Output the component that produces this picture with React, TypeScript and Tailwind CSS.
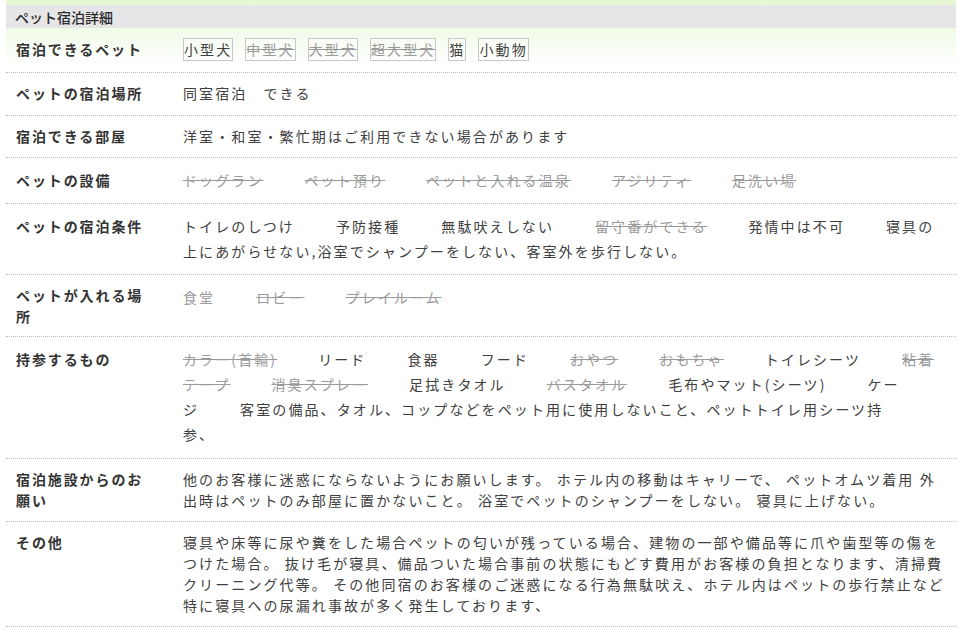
import React from "react";

type Item = { t: string; s?: boolean; g?: boolean };

const LABEL = "w-[177px] shrink-0 pl-[10px] pr-[32px] text-[14px] font-bold tracking-[1.9px] text-[#333]";
const VALUE = "w-[764px] text-[14px] tracking-[2.1px] text-[#404040]";

function ItemList({ items }: { items: Item[] }) {
  return (
    <div className={VALUE + " leading-[25px]"}>
      {items.map((it, i) => (
        <span
          key={i}
          className={
            "mr-[41px] " +
            (it.s
              ? "text-[#9a9a9a] line-through decoration-[#9a9a9a]"
              : it.g
              ? "text-[#9a9a9a]"
              : "")
          }
        >
          {it.t}
        </span>
      ))}
    </div>
  );
}

function Row({
  label,
  pb,
  labelLead,
  children,
}: {
  label: string;
  pb: string;
  labelLead: string;
  children: React.ReactNode;
}) {
  return (
    <div className={"flex border-b border-dotted border-[#bdbdbd] pt-[10px] " + pb}>
      <div className={LABEL + " " + labelLead}>{label}</div>
      {children}
    </div>
  );
}

export default function App() {
  const pets: Item[] = [
    { t: "小型犬" },
    { t: "中型犬", s: true },
    { t: "大型犬", s: true },
    { t: "超大型犬", s: true },
    { t: "猫" },
    { t: "小動物" },
  ];
  const facilities: Item[] = [
    { t: "ドッグラン", s: true },
    { t: "ペット預り", s: true },
    { t: "ペットと入れる温泉", s: true },
    { t: "アジリティ", s: true },
    { t: "足洗い場", s: true },
  ];
  const conditions: Item[] = [
    { t: "トイレのしつけ" },
    { t: "予防接種" },
    { t: "無駄吠えしない" },
    { t: "留守番ができる", s: true },
    { t: "発情中は不可" },
    { t: "寝具の上にあがらせない,浴室でシャンプーをしない、客室外を歩行しない。" },
  ];
  const places: Item[] = [
    { t: "食堂", g: true },
    { t: "ロビー", s: true },
    { t: "プレイルーム", s: true },
  ];
  const bring: Item[] = [
    { t: "カラー(首輪)", s: true },
    { t: "リード" },
    { t: "食器" },
    { t: "フード" },
    { t: "おやつ", s: true },
    { t: "おもちゃ", s: true },
    { t: "トイレシーツ" },
    { t: "粘着テープ", s: true },
    { t: "消臭スプレー", s: true },
    { t: "足拭きタオル" },
    { t: "バスタオル", s: true },
    { t: "毛布やマット(シーツ)" },
    { t: "ケージ" },
    { t: "客室の備品、タオル、コップなどをペット用に使用しないこと、ペットトイレ用シーツ持参、" },
  ];

  return (
    <div className="min-h-[630px] bg-white font-['Noto_Sans_CJK_JP','Noto_Sans',sans-serif]">
      <div className="ml-[6px] w-[950px] bg-[linear-gradient(to_bottom,#e5f7d3_0px,#f1fbe9_30px,#ffffff_66px)] pt-[5px]">
        <div className="flex h-[23px] items-center bg-[#e6e6e8] pl-[9px] text-[14px] font-medium leading-none text-[#2a2a2a]">
          ペット宿泊詳細
        </div>

        <Row label="宿泊できるペット" pb="pb-[11px]" labelLead="leading-[23px]">
          <div className={VALUE + " flex items-start gap-[12px] leading-[21px]"}>
            {pets.map((p, i) => (
              <span
                key={i}
                className={
                  "inline-block border border-[#c8c8c8] bg-white/40 " +
                  (p.s ? "text-[#9a9a9a] line-through decoration-[#9a9a9a]" : "")
                }
              >
                {p.t}
              </span>
            ))}
          </div>
        </Row>

        <Row label="ペットの宿泊場所" pb="pb-[11px]" labelLead="leading-[21px]">
          <div className={VALUE + " leading-[21px]"}>同室宿泊　できる</div>
        </Row>

        <Row label="宿泊できる部屋" pb="pb-[10px]" labelLead="leading-[21px]">
          <div className={VALUE + " leading-[21px]"}>洋室・和室・繁忙期はご利用できない場合があります</div>
        </Row>

        <Row label="ペットの設備" pb="pb-[10px]" labelLead="leading-[25px]">
          <ItemList items={facilities} />
        </Row>

        <Row label="ペットの宿泊条件" pb="pb-[10px]" labelLead="leading-[25px]">
          <ItemList items={conditions} />
        </Row>

        <Row label="ペットが入れる場所" pb="pb-[9px]" labelLead="leading-[21px]">
          <ItemList items={places} />
        </Row>

        <Row label="持参するもの" pb="pb-[11px]" labelLead="leading-[25px]">
          <ItemList items={bring} />
        </Row>

        <Row label="宿泊施設からのお願い" pb="pb-[10px]" labelLead="leading-[21px]">
          <div className={VALUE + " leading-[21px]"}>
            他のお客様に迷惑にならないようにお願いします。 ホテル内の移動はキャリーで、 ペットオムツ着用 外出時はペットのみ部屋に置かないこと。 浴室でペットのシャンプーをしない。 寝具に上げない。
          </div>
        </Row>

        <Row label="その他" pb="pb-[10px]" labelLead="leading-[21px]">
          <div className={VALUE + " leading-[21px]"}>
            寝具や床等に尿や糞をした場合ペットの匂いが残っている場合、建物の一部や備品等に爪や歯型等の傷をつけた場合。 抜け毛が寝具、備品ついた場合事前の状態にもどす費用がお客様の負担となります、清掃費クリーニング代等。 その他同宿のお客様のご迷惑になる行為無駄吠え、ホテル内はペットの歩行禁止など特に寝具への尿漏れ事故が多く発生しております、
          </div>
        </Row>
      </div>
    </div>
  );
}
